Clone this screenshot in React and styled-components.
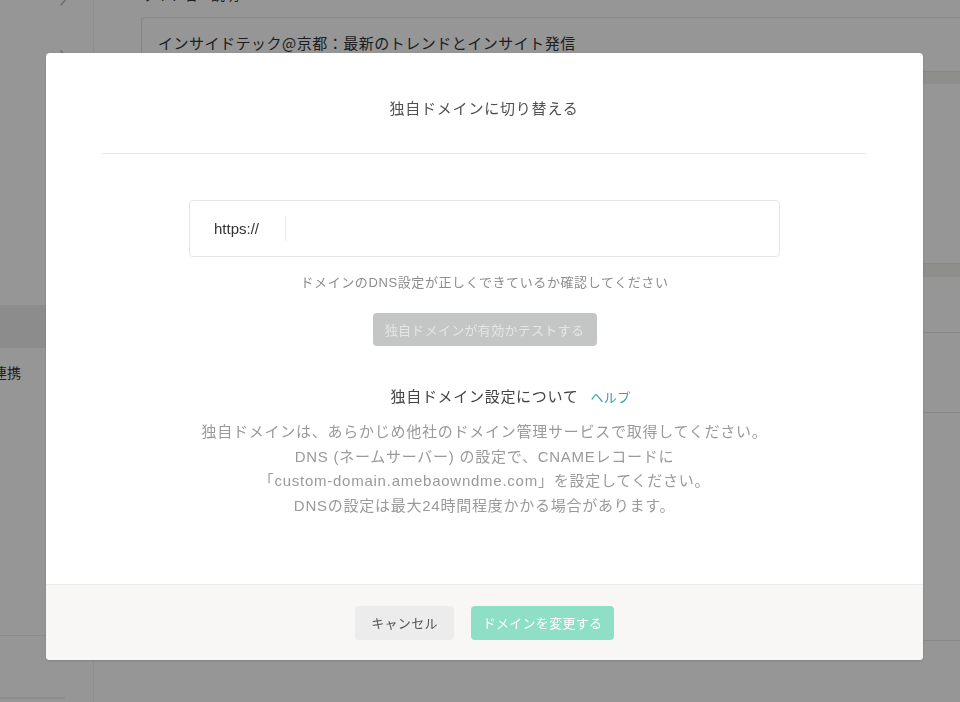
import styled, { createGlobalStyle } from "styled-components"

const GlobalStyle = createGlobalStyle`
    html, body {
        margin: 0;
        padding: 0;
        height: 100%;
        overflow: hidden;
    }
    body {
        font-family: "Liberation Sans", "Noto Sans CJK JP", sans-serif;
        color: #333;
        background: #fff;
    }
`

const Page = styled.div`
    display: flex;
    height: 100vh;
`

const Sidebar = styled.aside`
    width: 93px;
    flex-shrink: 0;
    border-right: 1px solid #f0f0f0;
    background: #fff;
    display: flex;
    flex-direction: column;
    overflow: hidden;
`

const SideRow = styled.div`
    height: ${props => props.h}px;
    flex-shrink: 0;
    display: flex;
    align-items: center;
    justify-content: flex-end;
    padding-right: 24px;
    background: ${props => props.active ? "#efefef" : "transparent"};
    border-bottom: ${props => props.line ? "1px solid #ececec" : "none"};
    margin-top: ${props => props.mt || 0}px;
    box-sizing: border-box;
`

const SideLabel = styled.div`
    height: ${props => props.h}px;
    flex-shrink: 0;
    display: flex;
    align-items: center;
    white-space: nowrap;
    margin-left: -91px;
    font-size: 14px;
    color: #333;
`

const SideFoot = styled.div`
    margin-top: auto;
    width: 65px;
    border-bottom: 2px solid #ececec;
    margin-bottom: 3px;
`

const Main = styled.main`
    flex: 1;
    display: flex;
    flex-direction: column;
    background: #fff;
`

const Section = styled.div`
    padding: 0 0 0 47px;
`

const Heading = styled.div`
    font-size: 14px;
    margin-top: -16px;
    height: 20px;
    color: #333;
`

const Field = styled.div`
    margin-top: 13px;
    height: 55px;
    border: 1px solid #e4e4e4;
    border-right: none;
    border-radius: 4px 0 0 4px;
    display: flex;
    align-items: center;
    padding: 0 0 4px 16px;
    box-sizing: border-box;
    font-size: 15px;
    letter-spacing: 0.5px;
    font-family: "Noto Sans CJK JP", sans-serif;
    color: #333;
`

const Band = styled.div`
    height: ${props => props.h}px;
    background: #f2f1f0;
`

const Row = styled.div`
    height: ${props => props.h}px;
    border-bottom: 1px solid #e8e8e8;
    box-sizing: border-box;
`

const Overlay = styled.div`
    position: fixed;
    inset: 0;
    background: rgba(0, 0, 0, 0.41);
    padding: 53px 0 0 46px;
    box-sizing: border-box;
`

const Modal = styled.div`
    width: 877px;
    height: 607px;
    background: #fff;
    border-radius: 4px;
    display: flex;
    flex-direction: column;
    overflow: hidden;
    box-shadow: 0 1px 3px rgba(0, 0, 0, 0.15);
    font-family: "Liberation Sans", "Noto Sans CJK JP", sans-serif;
`

const ModalHeader = styled.div`
    margin: 0 57px 0 56px;
    height: 101px;
    border-bottom: 1px solid #e8e8e8;
    display: flex;
    align-items: center;
    justify-content: center;
    padding-top: 8px;
    box-sizing: border-box;
`

const Title = styled.h2`
    margin: 0;
    font-size: 15px;
    font-weight: normal;
    letter-spacing: 0.8px;
    color: #505050;
`

const ModalBody = styled.div`
    flex: 1;
    display: flex;
    flex-direction: column;
    align-items: center;
    padding-top: 46px;
`

const InputBox = styled.div`
    width: 591px;
    height: 57px;
    border: 1px solid #e6e6e6;
    border-radius: 4px;
    box-sizing: border-box;
    display: flex;
    align-items: center;
`

const Prefix = styled.span`
    width: 96px;
    padding-left: 24px;
    box-sizing: border-box;
    font-size: 15px;
    color: #333;
    border-right: 1px solid #ececec;
    line-height: 25px;
`

const Hint = styled.p`
    margin: 16px 0 0;
    font-size: 13px;
    line-height: 20px;
    letter-spacing: 0.6px;
    color: #8c8c8c;
`

const Button = styled.button`
    font-family: "Liberation Sans", "Noto Sans CJK JP", sans-serif;
    font-size: 13px;
    letter-spacing: 0.3px;
    border: none;
    border-radius: 4px;
    height: ${props => props.h || 34}px;
    width: ${props => props.w}px;
    margin-top: ${props => props.mt || 0}px;
    background: ${props => props.bg};
    color: ${props => props.fg};
    padding: 0;
    cursor: pointer;
`

const AboutTitle = styled.div`
    margin-top: 40px;
    align-self: stretch;
    display: grid;
    grid-template-columns: 1fr auto 1fr;
    align-items: baseline;
    line-height: 22px;
`

const AboutLabel = styled.span`
    grid-column: 2;
    font-size: 15px;
    letter-spacing: 0.7px;
    color: #444;
`

const HelpLink = styled.a`
    grid-column: 3;
    justify-self: start;
    margin-left: 12px;
    font-size: 13px;
    color: #2ba3a8;
    text-decoration: none;
    letter-spacing: 0.4px;
`

const About = styled.p`
    margin: 11px 0 0;
    text-align: center;
    font-size: 15px;
    line-height: 24.7px;
    letter-spacing: 0.75px;
    color: #9a9a9a;
`

const ModalFooter = styled.div`
    height: 76px;
    background: #f8f7f5;
    border-top: 1px solid #ebebeb;
    box-sizing: border-box;
    display: flex;
    align-items: center;
    justify-content: center;
    gap: 17px;
`

const Chevron = () => (
    <svg width="10" height="16" viewBox="0 0 10 16" fill="none">
        <path d="M2 1l6 7-6 7" stroke="#bdbdbd" strokeWidth="1.6" strokeLinecap="round" strokeLinejoin="round" />
    </svg>
)

const App = () => {
    return <>
        <GlobalStyle />
        <Page>
            <Sidebar>
                <SideRow h={16} mt={-10}><Chevron /></SideRow>
                <SideRow h={104}><Chevron /></SideRow>
                <SideRow h={195} />
                <SideRow h={43} active />
                <SideLabel h={48}>外部サービス連携</SideLabel>
                <SideRow h={240} line />
                <SideFoot />
            </Sidebar>
            <Main>
                <Section>
                    <Heading>サイト名・説明</Heading>
                    <Field>インサイドテック@京都：最新のトレンドとインサイト発信</Field>
                </Section>
                <Band h={12} />
                <Row h={180} />
                <Band h={13} />
                <Row h={56} />
                <Row h={80} />
                <Row h={228} />
            </Main>
        </Page>
        <Overlay>
            <Modal>
                <ModalHeader>
                    <Title>独自ドメインに切り替える</Title>
                </ModalHeader>
                <ModalBody>
                    <InputBox>
                        <Prefix>https://</Prefix>
                    </InputBox>
                    <Hint>ドメインのDNS設定が正しくできているか確認してください</Hint>
                    <Button w={224} h={33} mt={20} bg="#c3c6c5" fg="#e4e6e5">独自ドメインが有効かテストする</Button>
                    <AboutTitle>
                        <AboutLabel>独自ドメイン設定について</AboutLabel>
                        <HelpLink href="#">ヘルプ</HelpLink>
                    </AboutTitle>
                    <About>
                        独自ドメインは、あらかじめ他社のドメイン管理サービスで取得してください。<br />
                        DNS (ネームサーバー) の設定で、CNAMEレコードに<br />
                        「custom-domain.amebaowndme.com」を設定してください。<br />
                        DNSの設定は最大24時間程度かかる場合があります。
                    </About>
                </ModalBody>
                <ModalFooter>
                    <Button w={99} bg="#ececec" fg="#555">キャンセル</Button>
                    <Button w={143} bg="#8fdec6" fg="#fff">ドメインを変更する</Button>
                </ModalFooter>
            </Modal>
        </Overlay>
    </>
}

export default App
